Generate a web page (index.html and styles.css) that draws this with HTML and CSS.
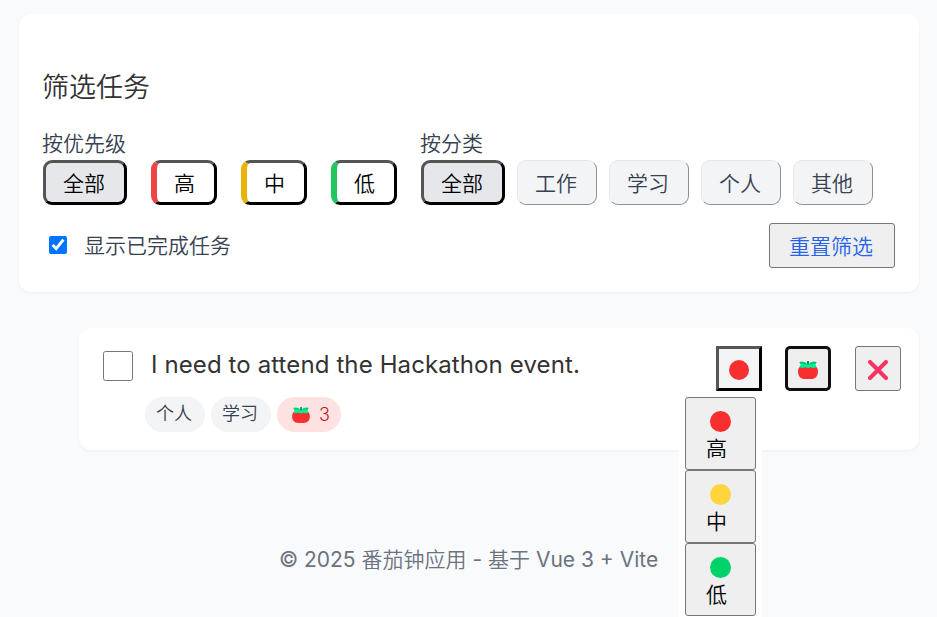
FILE: index.html
```html
<!DOCTYPE html>
<html lang="zh-CN">
<head>
<meta charset="utf-8">
<title>番茄钟应用</title>
<link rel="stylesheet" href="styles.css">
</head>
<body>
<svg class="defs" width="0" height="0" aria-hidden="true">
  <symbol id="tomato" viewBox="0 0 20 18">
    <path d="M10 4.2C15 2.6 20 5 20 10.5C20 15.5 17 18 13 18H7C3 18 0 15.5 0 10.5C0 5 5 2.6 10 4.2Z" fill="#f92f2f"/>
    <path d="M1.4 1.2C4.4.4 7 1 9.2 2.6V0H10.8V2.6C13 1 15.6.4 18.6 1.2L17.4 3.5L18.4 6.2C16.2 7.4 14 7.2 12.6 6.1C11.2 7.6 8.8 7.6 7.4 6.1C6 7.2 3.8 7.4 1.6 6.2L2.8 3.5Z" fill="#00ee95"/>
    <path d="M1.4 1.2C4 .4 6.5 1 8.4 2.4L7.4 3.2L2.6 3ZM18.6 1.2C16 .4 13.5 1 11.6 2.4L12.6 3.2L17.4 3Z" fill="#00cf70"/>
    <path d="M9.2 0H10.8V3.6H9.2Z" fill="#087f62"/>
  </symbol>
</svg>
<section class="card filters">
  <h2>筛选任务</h2>
  <div class="groups">
    <div class="group priority">
      <label>按优先级</label>
      <div class="options">
        <button class="btn active">全部</button>
        <button class="btn level high">高</button>
        <button class="btn level medium">中</button>
        <button class="btn level low">低</button>
      </div>
    </div>
    <div class="group category">
      <label>按分类</label>
      <div class="options">
        <button class="btn active">全部</button>
        <button class="btn">工作</button>
        <button class="btn">学习</button>
        <button class="btn">个人</button>
        <button class="btn">其他</button>
      </div>
    </div>
  </div>
  <div class="filter-footer">
    <label class="show-done"><input type="checkbox" checked><span>显示已完成任务</span></label>
    <button class="reset">重置筛选</button>
  </div>
</section>
<article class="card task">
  <input class="done" type="checkbox">
  <div class="info">
    <div class="task-title">I need to attend the Hackathon event.</div>
    <div class="tags">
      <span class="tag">个人</span>
      <span class="tag">学习</span>
      <span class="tag count"><svg width="18" height="16"><use href="#tomato"/></svg>3</span>
    </div>
  </div>
  <div class="actions">
    <div class="picker">
      <button class="action selected"><i class="dot red"></i></button>
      <div class="menu">
        <button><i class="dot red"></i><span>高</span></button>
        <button><i class="dot yellow"></i><span>中</span></button>
        <button><i class="dot green"></i><span>低</span></button>
      </div>
    </div>
    <button class="action focused"><svg class="tomato-icon" width="20" height="18"><use href="#tomato"/></svg></button>
    <button class="action"><svg class="cross" width="20" height="20" viewBox="0 0 20 20"><path d="M2 2L18 18M18 2L2 18" stroke="#fb3164" stroke-width="4" stroke-linecap="round"/></svg></button>
  </div>
</article>
<footer>© 2025 <span>番茄钟应用</span> - <span>基于</span> Vue 3 + Vite</footer>
</body>
</html>
```
FILE: styles.css
```css
* { box-sizing: border-box; }
body {
  margin: 0;
  padding: 14px 18px 0 19px;
  height: 617px;
  overflow: hidden;
  background: #f9fafc;
  color: #333;
  font: 350 21px/31px Inter, "Noto Sans CJK SC", sans-serif;
}
.defs { position: absolute; }
button { font: inherit; margin: 0; }
.card {
  background: #fff;
  border-radius: 12px;
  box-shadow: 0 1px 3px rgba(0, 0, 0, .05);
}
.filters { height: 278px; padding: 53px 24px 24px 23px; }
h2 { margin: 0 0 19px; font-size: 27px; font-weight: 350; line-height: 42px; }
.groups { display: flex; gap: 24px; }
.group > label { display: block; height: 32px; color: #374151; }
.options { display: flex; }
.priority .options { gap: 24px; padding-left: 1px; }
.category .options { gap: 12px; padding-left: 1px; }
.groups { gap: 23px; }
.btn {
  height: 45px;
  width: 80px;
  padding: 2px 2px 0 0;
  border: 1px solid;
  border-color: #e5e7eb #8e9095 #8e9095 #e5e7eb;
  border-radius: 9px;
  background: #f3f4f6;
  color: #374151;
}
.btn.active, .btn.level {
  border: 3px solid;
  border-color: #555 #000 #000 #555;
  color: #000;
}
.btn.active { width: 84px; background: #e5e7eb; }
.btn.level { width: 66px; border-left-width: 6px; background: #fff; }
.btn.high { border-left-color: #ef4444; }
.btn.medium { border-left-color: #eab308; }
.btn.low { border-left-color: #22c55e; }
.filter-footer {
  display: flex;
  justify-content: space-between;
  margin-top: 18px;
}
.show-done { display: flex; align-items: center; height: 44px; color: #374151; }
.show-done input { width: 18px; height: 18px; margin: 0 17px 0 7px; }
.reset {
  width: 126px;
  height: 45px;
  padding: 2px 2px 0 0;
  border: 1px solid #767676;
  border-radius: 3px;
  background: #efefef;
  color: #2563eb;
}
.task {
  display: flex;
  height: 122px;
  margin: 36px 0 0 60px;
  padding: 18px 18px 0 24px;
}
.done { flex: none; width: 30px; height: 30px; margin: 5px 12px 0 0; }
.info { flex: 1; }
.task-title {
  padding-left: 6px;
  height: 51px;
  font-size: 24px;
  font-weight: 400;
  line-height: 37px;
  letter-spacing: .11px;
}
.tags { display: flex; gap: 6px; }
.tag {
  width: 60px;
  height: 35px;
  padding-right: 2px;
  border-radius: 18px;
  background: #f3f4f6;
  color: #374151;
  font-size: 18px;
  line-height: 34px;
  text-align: center;
}
.tag.count {
  display: flex;
  align-items: center;
  gap: 9px;
  width: 64px;
  padding: 0 0 0 15px;
  background: #fee2e2;
  color: #b91c1c;
}
.actions { display: flex; gap: 24px; }
.picker { position: relative; height: 45px; margin-right: -1px; }
.action {
  display: flex;
  align-items: center;
  justify-content: center;
  width: 46px;
  height: 45px;
  padding: 3px 0 0;
  border: 1px solid #767676;
  border-radius: 3px;
  background: #efefef;
}
.action.selected {
  border: 3px solid;
  border-color: #555 #000 #000 #555;
  border-radius: 0;
  background: #f3f4f6;
}
.action.focused { border: 3px solid #101010; border-radius: 5px; }
.dot { display: block; width: 20px; height: 20px; border-radius: 50%; }
.red { background: #f92f2f; }
.yellow { background: #ffd43d; }
.green { background: #00d26a; }
.menu {
  position: absolute;
  z-index: 2;
  top: 45px;
  right: 0;
  width: 83px;
  height: 231px;
  padding: 6px;
  background: #fff;
}
.menu button {
  display: block;
  width: 71px;
  height: 73px;
  padding: 9px 20px 0;
  border: 1px solid #767676;
  border-radius: 3px;
  background: #efefef;
  color: #000;
  text-align: left;
}
.menu .dot { width: 21px; height: 21px; margin-left: 4px; }
.menu span { display: block; line-height: 33px; }
footer {
  margin-top: 94px;
  padding-right: 1px;
  text-align: center;
  color: #6b7280;
  font-weight: 400;
}
footer span { font-weight: 350; }
```
